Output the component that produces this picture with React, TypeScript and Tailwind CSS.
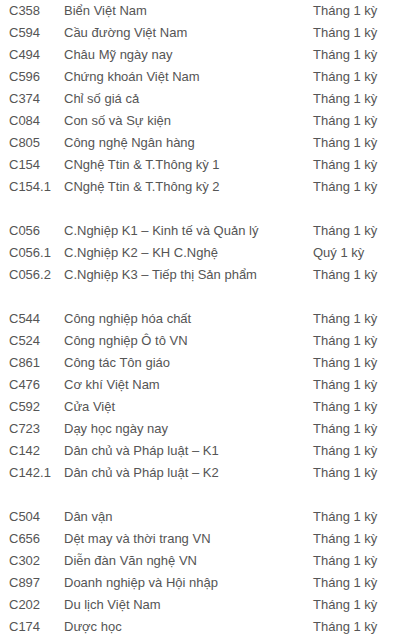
import React from 'react';

type Row = [string, string, string] | null;

const rows: Row[] = [
  ['C358', 'Biển Việt Nam', 'Tháng 1 kỳ'],
  ['C594', 'Cầu đường Việt Nam', 'Tháng 1 kỳ'],
  ['C494', 'Châu Mỹ ngày nay', 'Tháng 1 kỳ'],
  ['C596', 'Chứng khoán Việt Nam', 'Tháng 1 kỳ'],
  ['C374', 'Chỉ số giá cả', 'Tháng 1 kỳ'],
  ['C084', 'Con số và Sự kiện', 'Tháng 1 kỳ'],
  ['C805', 'Công nghệ Ngân hàng', 'Tháng 1 kỳ'],
  ['C154', 'CNghệ Ttin & T.Thông kỳ 1', 'Tháng 1 kỳ'],
  ['C154.1', 'CNghệ Ttin & T.Thông kỳ 2', 'Tháng 1 kỳ'],
  null,
  ['C056', 'C.Nghiệp K1 – Kinh tế và Quản lý', 'Tháng 1 kỳ'],
  ['C056.1', 'C.Nghiệp K2 – KH C.Nghệ', 'Quý 1 kỳ'],
  ['C056.2', 'C.Nghiệp K3 – Tiếp thị Sản phẩm', 'Tháng 1 kỳ'],
  null,
  ['C544', 'Công nghiệp hóa chất', 'Tháng 1 kỳ'],
  ['C524', 'Công nghiệp Ô tô VN', 'Tháng 1 kỳ'],
  ['C861', 'Công tác Tôn giáo', 'Tháng 1 kỳ'],
  ['C476', 'Cơ khí Việt Nam', 'Tháng 1 kỳ'],
  ['C592', 'Cửa Việt', 'Tháng 1 kỳ'],
  ['C723', 'Dạy học ngày nay', 'Tháng 1 kỳ'],
  ['C142', 'Dân chủ và Pháp luật – K1', 'Tháng 1 kỳ'],
  ['C142.1', 'Dân chủ và Pháp luật – K2', 'Tháng 1 kỳ'],
  null,
  ['C504', 'Dân vận', 'Tháng 1 kỳ'],
  ['C656', 'Dệt may và thời trang VN', 'Tháng 1 kỳ'],
  ['C302', 'Diễn đàn Văn nghệ VN', 'Tháng 1 kỳ'],
  ['C897', 'Doanh nghiệp và Hội nhập', 'Tháng 1 kỳ'],
  ['C202', 'Du lịch Việt Nam', 'Tháng 1 kỳ'],
  ['C174', 'Dược học', 'Tháng 1 kỳ'],
];

export default function App() {
  return (
    <div className="w-[407px] h-[639px] overflow-hidden bg-white pl-[9px] font-['Liberation_Sans',Arial,sans-serif] text-[13px] leading-[22px] text-[#555]">
      {rows.map((r, i) =>
        r ? (
          <div key={i} className="grid grid-cols-[55px_249px_1fr] h-[22px] whitespace-nowrap">
            <span>{r[0]}</span>
            <span>{r[1]}</span>
            <span>{r[2]}</span>
          </div>
        ) : (
          <div key={i} className="h-[22px]" />
        )
      )}
    </div>
  );
}
